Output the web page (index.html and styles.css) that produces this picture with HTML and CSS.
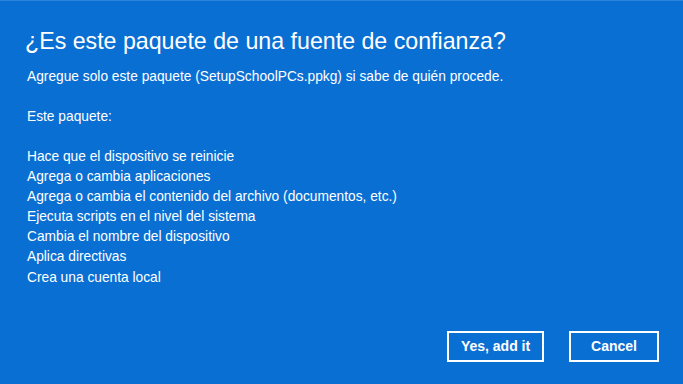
FILE: index.html
```html
<!DOCTYPE html>
<html lang="es">
<head>
  <meta charset="UTF-8">
  <title>Agregar paquete</title>
  <meta name="viewport" content="width=device-width, initial-scale=1.0">
  <link rel="stylesheet" href="styles.css">
</head>
<body>

<div class="dialog">
  <h1>¿Es este paquete de una fuente de confianza?</h1>
  <p class="intro">Agregue solo este paquete (SetupSchoolPCs.ppkg) si sabe de quién procede.</p>

  <p class="lead">Este paquete:</p>

  <ul class="effects">
    <li>Hace que el dispositivo se reinicie</li>
    <li>Agrega o cambia aplicaciones</li>
    <li>Agrega o cambia el contenido del archivo (documentos, etc.)</li>
    <li>Ejecuta scripts en el nivel del sistema</li>
    <li>Cambia el nombre del dispositivo</li>
    <li>Aplica directivas</li>
    <li>Crea una cuenta local</li>
  </ul>

  <div class="actions">
    <button class="btn-yes">Yes, add it</button>
    <button class="btn-cancel">Cancel</button>
  </div>
</div>

</body>
</html>
```

FILE: styles.css
```css
html, body {
  margin: 0;
  height: 100%;
}

body {
  font-family: "Liberation Sans", Arial, sans-serif;
  background: #0a6fd3;
  color: white;
}

.dialog {
  height: 384px;
  box-sizing: border-box;
  border-top: 1px solid #2a84dc;
  padding: 25px 24px 0 27px;
  display: flex;
  flex-direction: column;
}

.dialog h1 {
  font-size: 23.2px;
  font-weight: normal;
  margin: 0 0 12px -2px;
  line-height: 30px;
}

.intro {
  font-size: 13.75px;
  margin: 0;
  line-height: 18px;
}

.lead {
  font-size: 13.75px;
  margin: 22px 0 0;
  line-height: 18px;
}

.effects {
  list-style: none;
  margin: 21px 0 0;
  padding: 0;
  font-size: 13.75px;
  line-height: 20.1px;
}

.actions {
  display: flex;
  justify-content: flex-end;
  gap: 25px;
  margin-top: 43px;
}

.actions button {
  background: transparent;
  color: white;
  border: 2px solid white;
  font-family: "Liberation Sans", Arial, sans-serif;
  font-size: 14px;
  font-weight: bold;
  height: 31px;
  cursor: pointer;
}

.btn-yes {
  width: 97px;
}

.btn-cancel {
  width: 90px;
}
```
